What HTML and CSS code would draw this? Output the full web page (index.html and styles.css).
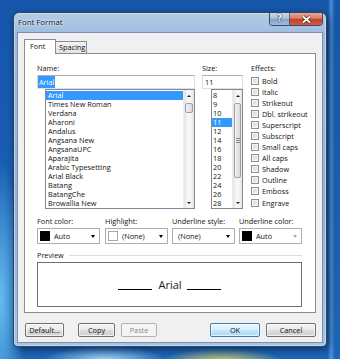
FILE: index.html
```html
<!DOCTYPE html>
<html>
<head>
    <link rel="stylesheet" href="styles.css">
    <title>Font Format</title>
</head>
<body>
    <div class="desktop">
        <div class="window">
            <div class="titlebar">
                <span class="title">Font Format</span>
                <div class="caption-buttons">
                    <div class="cap-btn help">?</div>
                    <div class="cap-btn close">
                        <svg width="33" height="13" viewBox="0 0 33 13">
                            <path d="M13 3.5 L20 9.5 M20 3.5 L13 9.5" stroke="#5a1a10" stroke-width="3.2" fill="none"/>
                            <path d="M13 3.5 L20 9.5 M20 3.5 L13 9.5" stroke="#ffffff" stroke-width="1.8" fill="none"/>
                        </svg>
                    </div>
                </div>
            </div>
            <div class="client">
                <div class="tabs">
                    <div class="tab active">Font</div>
                    <div class="tab spacing">Spacing</div>
                </div>
                <div class="panel">
                    <div class="top-row">
                        <div class="col-name">
                            <div class="label">Name:</div>
                            <div class="textbox"><span class="sel">Arial</span></div>
                            <div class="listbox font-list">
                                <ul>
                                    <li class="selected">Arial</li>
                                    <li>Times New Roman</li>
                                    <li>Verdana</li>
                                    <li>Aharoni</li>
                                    <li>Andalus</li>
                                    <li>Angsana New</li>
                                    <li>AngsanaUPC</li>
                                    <li>Aparajita</li>
                                    <li>Arabic Typesetting</li>
                                    <li>Arial Black</li>
                                    <li>Batang</li>
                                    <li>BatangChe</li>
                                    <li>Browallia New</li>
                                </ul>
                                <div class="scrollbar">
                                    <div class="arrow up"></div>
                                    <div class="thumb small"></div>
                                    <div class="track"></div>
                                    <div class="arrow down"></div>
                                </div>
                            </div>
                        </div>
                        <div class="col-size">
                            <div class="label">Size:</div>
                            <div class="textbox size-box">11</div>
                            <div class="listbox size-list">
                                <ul>
                                    <li>8</li>
                                    <li>9</li>
                                    <li>10</li>
                                    <li class="selected">11</li>
                                    <li>12</li>
                                    <li>14</li>
                                    <li>16</li>
                                    <li>18</li>
                                    <li>20</li>
                                    <li>22</li>
                                    <li>24</li>
                                    <li>26</li>
                                    <li>28</li>
                                </ul>
                                <div class="scrollbar narrow">
                                    <div class="arrow up"></div>
                                    <div class="thumb long"><span class="grip"></span></div>
                                    <div class="track"></div>
                                    <div class="arrow down"></div>
                                </div>
                            </div>
                        </div>
                        <div class="col-effects">
                            <div class="label">Effects:</div>
                            <div class="check"><span class="box"></span>Bold</div>
                            <div class="check"><span class="box"></span>Italic</div>
                            <div class="check"><span class="box"></span>Strikeout</div>
                            <div class="check"><span class="box"></span>Dbl. strikeout</div>
                            <div class="check"><span class="box"></span>Superscript</div>
                            <div class="check"><span class="box"></span>Subscript</div>
                            <div class="check"><span class="box"></span>Small caps</div>
                            <div class="check"><span class="box"></span>All caps</div>
                            <div class="check"><span class="box"></span>Shadow</div>
                            <div class="check"><span class="box"></span>Outline</div>
                            <div class="check"><span class="box"></span>Emboss</div>
                            <div class="check"><span class="box"></span>Engrave</div>
                        </div>
                    </div>

                    <div class="combo-row">
                        <div class="combo-field">
                            <div class="label">Font color:</div>
                            <div class="combo"><span class="swatch"></span><span class="text">Auto</span><span class="drop"></span></div>
                        </div>
                        <div class="combo-field">
                            <div class="label">Highlight:</div>
                            <div class="combo"><span class="swatch white"></span><span class="text">(None)</span><span class="drop"></span></div>
                        </div>
                        <div class="combo-field">
                            <div class="label">Underline style:</div>
                            <div class="combo no-swatch"><span class="text">(None)</span><span class="drop"></span></div>
                        </div>
                        <div class="combo-field last">
                            <div class="label">Underline color:</div>
                            <div class="combo"><span class="swatch"></span><span class="text">Auto</span><span class="drop disabled"></span></div>
                        </div>
                    </div>

                    <div class="preview-head">Preview</div>
                    <div class="preview-box">
                        <span class="uline"></span>
                        <span class="preview-text">Arial</span>
                        <span class="uline"></span>
                    </div>
                </div>
                <div class="buttons">
                    <div class="btn default-btn">Default...</div>
                    <div class="btn copy-btn">Copy</div>
                    <div class="btn paste-btn disabled">Paste</div>
                    <div class="spacer"></div>
                    <div class="btn ok-btn">OK</div>
                    <div class="btn cancel-btn">Cancel</div>
                </div>
            </div>
        </div>
    </div>
</body>
</html>
```

FILE: styles.css
```css
* {
    box-sizing: border-box;
}
body {
    margin: 0;
    font-family: "Open Sans", "Noto Sans", sans-serif;
    font-size: 7.3px;
    color: #111111;
}
.desktop {
    width: 340px;
    height: 359px;
    overflow: hidden;
    padding: 12px 0 0 13px;
    background:
        radial-gradient(ellipse 62px 14px at 105px 360px, rgba(175, 222, 250, 0.95), rgba(175, 222, 250, 0) 100%),
        radial-gradient(ellipse 64px 16px at 222px 364px, rgba(246, 228, 86, 1), rgba(246, 228, 86, 0) 100%),
        radial-gradient(ellipse 26px 140px at 0 300px, rgba(110, 200, 245, 0.9), rgba(110, 200, 245, 0) 100%),
        linear-gradient(90deg, rgba(0, 0, 0, 0) 328px, rgba(120, 190, 245, 0.55) 331px, rgba(0, 0, 0, 0) 335px),
        linear-gradient(#1657ab, #1c66bd);
}
.window {
    width: 314px;
    height: 335px;
    border: 1px solid rgba(20, 38, 64, 0.8);
    border-radius: 6px 6px 5px 5px;
    background: linear-gradient(#b4cce8, #9fbce0 6%, #93b3db 60%, #a3c4e8);
    box-shadow: inset 0 0 0 1px rgba(255, 255, 255, 0.35), 2px 3px 8px rgba(0, 0, 0, 0.5);
    padding: 0 3px 3px;
    display: flex;
    flex-direction: column;
}
.titlebar {
    height: 19px;
    display: flex;
    justify-content: space-between;
    align-items: flex-start;
}
.title {
    font-size: 7.8px;
    line-height: 10px;
    margin: 4px 0 0 1px;
    text-shadow: 0 0 4px #ffffff, 0 0 2px #ffffff;
}
.caption-buttons {
    display: flex;
    height: 13px;
    border: 1px solid rgba(40, 55, 80, 0.85);
    border-top: none;
    border-radius: 0 0 4px 4px;
    overflow: hidden;
}
.cap-btn {
    height: 12px;
}
.help {
    width: 20px;
    border-right: 1px solid rgba(40, 55, 80, 0.7);
    background: linear-gradient(#cfdcec, #a9bfdb 45%, #86a2c9 50%, #9dbadf);
    color: #ffffff;
    font-family: "DejaVu Sans", sans-serif;
    font-weight: bold;
    font-size: 8px;
    line-height: 12px;
    text-align: center;
    text-shadow: 0 0 1px #203040, 0 0 2px #203040;
}
.close {
    width: 32px;
    background: linear-gradient(#e8a99c, #d77a64 45%, #c4402b 50%, #cf5a3f);
}
.client {
    flex: 1;
    background: #f0f0f0;
    border: 1px solid #7c90aa;
    padding: 6px 6px 5px;
    display: flex;
    flex-direction: column;
}
.tabs {
    display: flex;
    align-items: flex-end;
    height: 14px;
}
.tab {
    height: 12px;
    border: 1px solid #898c95;
    border-bottom: none;
    background: linear-gradient(#f4f4f4, #e2e2e2);
    line-height: 11px;
    white-space: nowrap;
}
.tab.active {
    width: 32px;
    height: 15px;
    margin-bottom: -1px;
    padding-left: 5px;
    line-height: 13px;
    background: #ffffff;
    position: relative;
    z-index: 1;
}
.tab.spacing {
    width: 31px;
    border-left: none;
    padding-left: 3px;
}
.panel {
    height: 260px;
    background: #ffffff;
    border: 1px solid #898c95;
    padding: 9px 0 0 12px;
}
.top-row {
    display: flex;
}
.label {
    height: 10px;
    line-height: 10px;
    margin-bottom: 2px;
    white-space: nowrap;
}
.col-name {
    width: 158px;
}
.col-size {
    width: 41px;
    margin-left: 7px;
}
.col-effects {
    margin-left: 8px;
}
.textbox {
    height: 14px;
    background: #ffffff;
    border: 1px solid #dbdfe6;
    border-top-color: #abadb3;
    line-height: 12px;
}
.sel {
    display: inline-block;
    height: 12px;
    padding: 0 1px;
    background: #3399ff;
    color: #ffffff;
}
.size-box {
    padding-left: 2px;
}
.listbox {
    display: flex;
    height: 120px;
    background: #ffffff;
    border: 1px solid #828790;
}
.font-list {
    margin-left: 8px;
}
.size-list {
    margin-left: 9px;
}
.listbox ul {
    flex: 1;
    list-style: none;
    margin: 0;
    padding: 1px 0 0;
    overflow: hidden;
}
.listbox li {
    height: 9px;
    line-height: 9px;
    padding-left: 2px;
    white-space: nowrap;
}
.size-list li {
    padding-left: 1px;
}
.listbox li.selected {
    background: #3399ff;
    color: #ffffff;
}
.scrollbar {
    width: 11px;
    display: flex;
    flex-direction: column;
    background: linear-gradient(90deg, #e4e4e4, #f6f6f6 35%, #f6f6f6 65%, #e4e4e4);
    border-left: 1px solid #ececec;
}
.scrollbar.narrow {
    width: 10px;
}
.arrow {
    height: 11px;
    display: flex;
    align-items: center;
    justify-content: center;
}
.arrow::before {
    content: "";
    border-left: 2.5px solid transparent;
    border-right: 2.5px solid transparent;
    border-bottom: 2.5px solid #1a1a1a;
}
.arrow.down::before {
    border-bottom: none;
    border-top: 2.5px solid #1a1a1a;
}
.thumb {
    margin: 2px 1px 0;
    border: 1px solid #a0a0a0;
    border-radius: 2px;
    background: linear-gradient(90deg, #f3f3f3, #e6e6e6 50%, #d8d8d8);
    display: flex;
    align-items: center;
    justify-content: center;
}
.thumb.small {
    height: 10px;
}
.thumb.long {
    height: 75px;
}
.grip {
    width: 4px;
    height: 5px;
    background: repeating-linear-gradient(#8a8a8a 0, #8a8a8a 1px, transparent 1px, transparent 2px);
}
.track {
    flex: 1;
}
.check {
    display: flex;
    align-items: center;
    height: 11.1px;
    white-space: nowrap;
}
.box {
    width: 8px;
    height: 8px;
    margin-right: 3px;
    border: 1px solid #8e8f8f;
    background: linear-gradient(135deg, #cfd2d5, #f4f4f4);
    box-shadow: inset 0 0 0 1px #f6f6f6;
}
.combo-row {
    display: flex;
    margin-top: 7px;
}
.combo-field {
    width: 63px;
    margin-right: 4px;
}
.combo-field:first-child {
    margin-right: 5px;
}
.combo {
    height: 16px;
    border: 1px solid #adadad;
    background: #ffffff;
    display: flex;
    align-items: center;
    padding-left: 2px;
}
.combo.no-swatch {
    padding-left: 5px;
}
.swatch {
    width: 10px;
    height: 10px;
    margin-right: 4px;
    background: #000000;
}
.swatch.white {
    background: #ffffff;
    border: 1px solid #a8a8a8;
}
.combo .text {
    flex: 1;
    white-space: nowrap;
}
.drop {
    margin-right: 4px;
    border-left: 2.5px solid transparent;
    border-right: 2.5px solid transparent;
    border-top: 3px solid #000000;
}
.drop.disabled {
    border-top-color: #a8a8a8;
}
.preview-head {
    width: 265px;
    height: 10px;
    line-height: 10px;
    margin-top: 6px;
    display: flex;
    align-items: center;
}
.preview-head::after {
    content: "";
    flex: 1;
    margin-left: 5px;
    border-top: 1px solid #d5dfe5;
}
.preview-box {
    width: 265px;
    height: 45px;
    margin-top: 2px;
    border: 1px solid #6e6e6e;
    background: #ffffff;
    display: flex;
    align-items: center;
    justify-content: center;
}
.preview-text {
    font-size: 11px;
    line-height: 14px;
    margin: 0 5px 0 6px;
    color: #1a1a1a;
}
.uline {
    width: 34px;
    height: 1px;
    margin-top: 9px;
    background: #000000;
}
.buttons {
    display: flex;
    height: 14px;
    margin-top: 10px;
    padding-left: 1px;
}
.btn {
    height: 14px;
    border: 1px solid #707070;
    border-radius: 2px;
    background: linear-gradient(#f2f2f2, #ebebeb 50%, #dddddd 50%, #cfcfcf);
    box-shadow: inset 0 0 0 1px rgba(255, 255, 255, 0.7);
    display: flex;
    align-items: center;
    justify-content: center;
    white-space: nowrap;
}
.default-btn {
    width: 39px;
    margin-right: 14px;
}
.copy-btn {
    width: 37px;
    margin-right: 6px;
}
.paste-btn {
    width: 36px;
}
.btn.disabled {
    border-color: #adb2b5;
    background: #f4f4f4;
    box-shadow: none;
    color: #8a8a8a;
}
.spacer {
    flex: 1;
}
.ok-btn {
    width: 50px;
    margin-right: 6px;
    border-color: #3c7fb1;
    background: linear-gradient(#eaf6fd, #d9f0fc 50%, #bee6fd 50%, #a7d9f5);
}
.cancel-btn {
    width: 50px;
}
```
